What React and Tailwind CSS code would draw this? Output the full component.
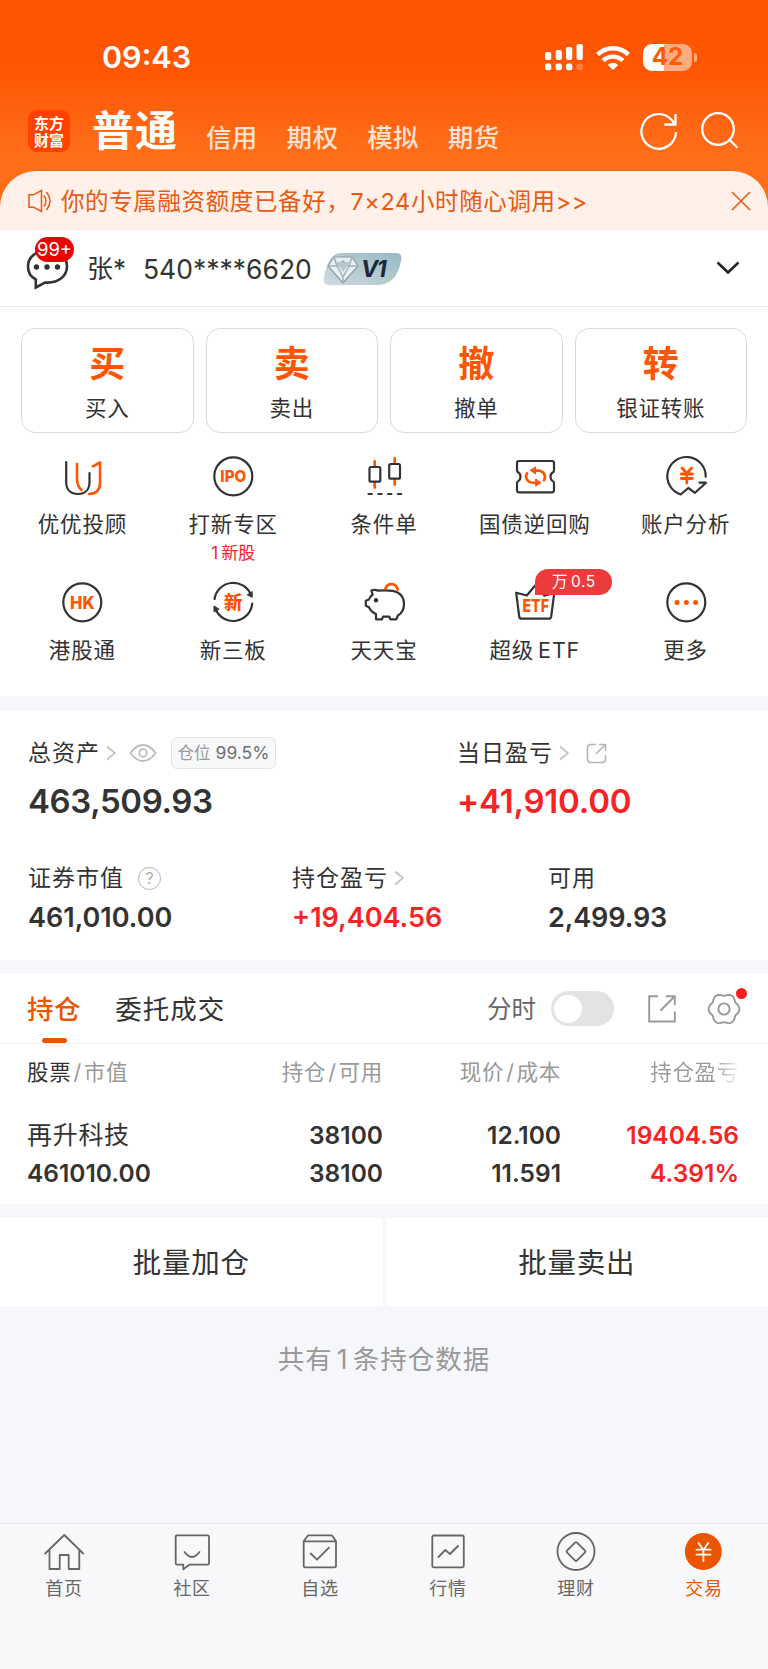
const actions = [
  { char: "买", label: "买入" },
  { char: "卖", label: "卖出" },
  { char: "撤", label: "撤单" },
  { char: "转", label: "银证转账" },
];

const DARK = "#333333";
const ORANGE = "#ff5500";

function Icon({ children }) {
  return (
    <svg
      width="40"
      height="40"
      viewBox="0 0 40 40"
      fill="none"
      strokeWidth="2.200"
      strokeLinecap="round"
      strokeLinejoin="round"
      className="overflow-visible"
    >
      {children}
    </svg>
  );
}

function IconText({ children, x = 20.3, y, size, length }) {
  return (
    <text
      x={x}
      y={y}
      textAnchor="middle"
      fontSize={size}
      fontWeight="800"
      fill={ORANGE}
      textLength={length}
      lengthAdjust="spacingAndGlyphs"
    >
      {children}
    </text>
  );
}

const services = [
  {
    label: "优优投顾",
    icon: (
      <Icon>
        <path d="M4.2 6V26C4.2 34 9 38 16 38S27.5 33.500 27.500 26V17" stroke={DARK} />
        <path d="M15 8V22C15 28 16.500 31.500 19.500 34M30.800 10.300 38 6.500V27C38 34 34.500 37.800 27 38" stroke={ORANGE} strokeWidth="2.600" />
      </Icon>
    ),
  },
  {
    label: "打新专区",
    sub: (
      <>
        <span className="mr-[3px]">1</span>新股
      </>
    ),
    icon: (
      <Icon>
        <circle cx="20.300" cy="20.300" r="19" stroke={DARK} />
        <IconText y="26.400" size="16.500" length="26">IPO</IconText>
      </Icon>
    ),
  },
  {
    label: "条件单",
    icon: (
      <Icon>
        <path d="M10.700 5.500V10.500M10.700 26.500V31.500M30.700 2.500V7.500M30.700 23.500V28.500" stroke={ORANGE} strokeWidth="2.800" />
        <rect x="5.500" y="11" width="10.800" height="14.700" rx="1.500" stroke={DARK} />
        <rect x="25.200" y="8" width="10.800" height="14.700" rx="1.500" stroke={DARK} />
        <path d="M4.500 38H38.500" stroke={DARK} strokeDasharray="3.300 6.500" />
      </Icon>
    ),
  },
  {
    label: "国债逆回购",
    icon: (
      <Icon>
        <path
          d="M4 5H37Q39 5 39 7V14.500Q39 16 37.500 16.500Q35.500 18 35.500 20.700T37.500 25Q39 25.500 39 27V34.300Q39 36.300 37 36.300H4Q2 36.300 2 34.300V27Q2 25.500 3.500 25Q5.500 23.400 5.500 20.700T3.500 16.500Q2 16 2 14.500V7Q2 5 4 5Z"
          stroke={DARK}
        />
        <path d="M12 17.300C9.500 21 12 26.300 17.500 26.800H21M29 24.300C31.500 20.500 29 15 23.500 14.600H20" stroke={ORANGE} strokeWidth="2.600" />
        <path d="M20.500 11.300V18L15.500 14.600ZM20.700 23.400V30.200L25.700 26.800Z" fill={ORANGE} stroke={ORANGE} strokeWidth="1" />
      </Icon>
    ),
  },
  {
    label: "账户分析",
    icon: (
      <Icon>
        <path d="M39.700 20.700A19.200 19.200 0 1 0 14.700 38.500L22.300 32 29 36.800 40 26.700H33.500" stroke={DARK} />
        <path d="M16 12 20.800 17.500 25.600 12M20.800 17.500V27M15.300 18H26.300M15.300 22.500H26.300" stroke={ORANGE} strokeWidth="2.800" />
      </Icon>
    ),
  },
  {
    label: "港股通",
    icon: (
      <Icon>
        <circle cx="20.300" cy="20.300" r="19" stroke={DARK} />
        <IconText y="26.500" size="17" length="24.500">HK</IconText>
      </Icon>
    ),
  },
  {
    label: "新三板",
    icon: (
      <Icon>
        <path d="M1.500 17A19 19 0 0 1 37.800 12.500M39.200 21.500A19 19 0 0 1 2.800 27.500" stroke={DARK} />
        <path d="M39.200 10V15.300L34.500 13ZM1 29.500V24L5.800 27Z" fill={DARK} stroke={DARK} strokeWidth="1" />
        <IconText y="26.800" size="18" length="18.500">新</IconText>
      </Icon>
    ),
  },
  {
    label: "天天宝",
    icon: (
      <Icon>
        <path
          d="M14 8.700Q11 7 7.300 8.500L8.700 12.500Q6 14.500 5 17.500L1.800 18.700V23.700L5 25.300Q7 30 12 32V37.300H18L19 34.700H25.300L26.300 37.300H32.300L34 33.500C42.500 28 41.500 15 34 10.800C29 7.800 20 8.300 14 8.700Z"
          stroke={DARK}
        />
        <circle cx="12" cy="18.300" r="2.200" fill={DARK} />
        <path d="M21.500 6.200C24 .5 31.500 .5 33.800 7.500" stroke={ORANGE} strokeWidth="2.800" />
      </Icon>
    ),
  },
  {
    label: (
      <>
        超级<span className="ml-1">ETF</span>
      </>
    ),
    badge: (
      <>
        万<span className="ml-[3px]">0.5</span>
      </>
    ),
    icon: (
      <Icon>
        <path d="M1.200 10.700 4.200 34.500Q4.500 36.700 6.500 36.700H33.800Q35.800 36.700 36.200 34.500L39.300 10.700 29.500 13.700 20.300 3.300 11.800 13.500Z" stroke={DARK} />
        <IconText x="20.700" y="30.200" size="17.500" length="26.500">ETF</IconText>
      </Icon>
    ),
  },
  {
    label: "更多",
    icon: (
      <Icon>
        <circle cx="20.300" cy="20.300" r="19" stroke={DARK} />
        <g fill={ORANGE}>
          <circle cx="11" cy="20.500" r="2.500" />
          <circle cx="20.300" cy="20.500" r="2.500" />
          <circle cx="29.600" cy="20.500" r="2.500" />
        </g>
      </Icon>
    ),
  },
];

const navItems = [
  {
    label: "首页",
    icon: <path d="M1.200 21.500 20.300 3 39.200 21.500M5.500 18V37H15.700V23H24.700V37H35.300V18" />,
  },
  {
    label: "社区",
    icon: (
      <path d="M5 3.300H35.500Q37 3.300 37 4.800V31.200Q37 32.700 35.500 32.700H17.300L11.300 37.200V32.700H5Q3.700 32.700 3.700 31.200V4.800Q3.700 3.300 5 3.300ZM12.500 20Q20 30 27.500 20" />
    ),
  },
  {
    label: "自选",
    icon: (
      <path d="M3.700 9.300 7.500 4Q8 3.300 9 3.300H31Q32 3.300 32.500 4L36 9.300V33.500Q36 35.300 34.500 35.300H5.200Q3.700 35.300 3.700 33.500ZM3.700 9.300H36M10.700 21.500 17 27.700 29 15.700" />
    ),
  },
  {
    label: "行情",
    icon: (
      <>
        <rect x="4.300" y="3.500" width="31.500" height="31.800" rx="1.500" />
        <path d="M10.500 25 17.300 18 22 22 30 14" />
      </>
    ),
  },
  {
    label: "理财",
    icon: (
      <>
        <circle cx="20" cy="19.500" r="18.500" />
        <rect x="13" y="12.500" width="14" height="14" rx="1.500" transform="rotate(45 20 19.500)" />
      </>
    ),
  },
  {
    label: "交易",
    active: true,
    icon: (
      <>
        <circle cx="19.300" cy="19.500" r="18.500" fill="#eb5500" stroke="none" />
        <path d="M14.500 11 19.400 18 24.300 11M19.400 18V29M12.500 17.700H26.500M12.500 22.700H26.500" stroke="#fff" />
      </>
    ),
  },
];

// six-lobed outline used by the settings button
const gearPath =
  Array.from({ length: 72 }, (_, i) => {
    const a = (i * Math.PI) / 36;
    const r = 14.4 + 1.1 * Math.cos(6 * a) - 0.1 * Math.cos(12 * a);
    return `${i ? "L" : "M"}${(17 + r * Math.cos(a)).toFixed(2)} ${(17 + r * Math.sin(a)).toFixed(2)}`;
  }).join("") + "Z";

function ChevronRight() {
  return (
    <svg width="10" height="16" viewBox="0 0 10 16" fill="none" stroke="#c2c2c2" strokeWidth="1.700">
      <path d="M1 1.500 9 8 1 14.500" />
    </svg>
  );
}

function StatusBar() {
  return (
    <div className="flex h-[94px] items-center pt-[20px] pl-[102px]">
      <span className="w-[443px] text-[30.500px] leading-none font-semibold">09:43</span>
      <svg width="38" height="27" viewBox="0 0 38 27" fill="#fff">
        <rect x="0" y="8" width="6.300" height="8" rx="2" />
        <rect x="10.600" y="6" width="6.300" height="10" rx="2" />
        <rect x="21" y="3" width="6.300" height="13" rx="2" />
        <rect x="31.500" y="0" width="6.300" height="16" rx="2" />
        <rect x="0" y="19.500" width="6.300" height="6.700" rx="2" />
        <rect x="10.600" y="19.500" width="6.300" height="6.700" rx="2" />
        <rect x="21" y="19.500" width="6.300" height="6.700" rx="2" />
        <rect x="31.500" y="19.500" width="6.300" height="6.700" rx="2" opacity=".25" />
      </svg>
      <svg className="ml-[13px]" width="34" height="25" viewBox="0 0 34 25" fill="none" stroke="#fff" strokeWidth="4.400">
        <path d="M1.600 9.600A22 22 0 0 1 32.400 9.600" />
        <path d="M7.200 15.600A14 14 0 0 1 26.800 15.600" />
        <path d="M17 25 11.800 20A7.400 7.400 0 0 1 22.200 20Z" fill="#fff" stroke="none" />
      </svg>
      <div className="ml-[13px] flex items-center">
        <div className="flex h-[27px] w-[49px] items-center justify-center rounded-[9px] bg-[linear-gradient(90deg,#fff_43%,#ffab80_43%)] text-[24px] leading-none font-bold text-[#ff5a08]">
          42
        </div>
        <div className="ml-[2px] h-[9px] w-[3px] rounded-r-full bg-[#ffab80]" />
      </div>
    </div>
  );
}

function Header() {
  return (
    <header className="h-[211px] bg-[linear-gradient(180deg,#ff5500_0px,#ff5602_70px,#ff6d19_150px,#ff6d19_211px)] text-white">
      <StatusBar />
      <div className="flex h-[74px] items-center pl-7">
        <div className="flex size-[42px] flex-col items-center justify-center rounded-[9px] bg-[#ff4200] font-['Noto_Sans_CJK_SC',sans-serif] text-[15px] leading-[17px] font-bold">
          <span>东方</span>
          <span>财富</span>
        </div>
        <h1 className="ml-[22px] w-[114px] text-[42px] leading-none font-bold tracking-[1px] whitespace-nowrap">普通</h1>
        <div className="mt-[13px] flex gap-[29px] text-[25.500px] leading-none font-medium tracking-[0.300px] text-[#ffe1d0]">
          <span>信用</span>
          <span>期权</span>
          <span>模拟</span>
          <span>期货</span>
        </div>
        <svg className="ml-auto" width="40" height="40" viewBox="0 0 40 40" fill="none" stroke="#fff" strokeWidth="2.300">
          <path d="M36 21A17.300 17.300 0 1 1 31.500 8.800L35 13" />
          <path d="M35.500 3V13.500H24.300" />
        </svg>
        <svg className="mr-[27px] ml-[21px]" width="40" height="40" viewBox="0 0 40 40" fill="none" stroke="#fff" strokeWidth="2.300">
          <circle cx="17" cy="18" r="15.800" />
          <path d="M28.300 28.500 36.500 36.700" />
        </svg>
      </div>
    </header>
  );
}

function Notice() {
  return (
    <div className="relative -mt-10 flex h-[59px] items-center rounded-t-[36px] bg-[#fff1ea] pl-7 text-[#e85a10]">
      <svg width="24" height="24" viewBox="0 0 24 24" fill="none" stroke="currentColor" strokeWidth="1.500">
        <path d="M1 5.800H5.500L13.500 1.500V22.500L5.500 18.200H1ZM16 6.500Q19.800 12 16 17.500M18.500 3Q25.500 12 18.500 21" />
      </svg>
      <p className="mt-[2px] ml-[9px] text-[23.500px] leading-none tracking-[0.620px] whitespace-nowrap">
        你的专属融资额度已备好，7×24小时随心调用&gt;&gt;
      </p>
      <svg className="mr-[17px] ml-auto" width="20" height="20" viewBox="0 0 20 20" stroke="currentColor" strokeWidth="1.600">
        <path d="M1 1 19 19M19 1 1 19" />
      </svg>
    </div>
  );
}

function Account() {
  return (
    <div className="flex h-[77px] items-center border-b border-[#ebebeb] pl-[26px] text-[#333]">
      <div className="relative">
        <svg width="44" height="44" viewBox="0 0 44 44" fill="none" stroke="#333" strokeWidth="2.600">
          <path d="M21.500 4.500C10 4.500 2 11 2 20.500C2 26.500 5 31 9.800 33.500V41.500L19 36.500C33 37.500 41 29.500 41 20.500C41 11 33 4.500 21.500 4.500Z" />
          <g fill="#333" stroke="none">
            <circle cx="10.500" cy="21" r="2.700" />
            <circle cx="21" cy="21" r="2.700" />
            <circle cx="31.500" cy="21" r="2.700" />
          </g>
        </svg>
        <span className="absolute -top-[9px] left-[9px] flex h-[25px] w-[39px] items-center justify-center rounded-full bg-[#ee0000] text-[18.500px] text-white">
          99+
        </span>
      </div>
      <span className="mt-[2px] ml-[17px] w-[56px] text-[26px] leading-none">张*</span>
      <span className="mt-[2px] w-[180px] text-[26.500px] leading-none">540****6620</span>
      <div className="relative mt-[2px] h-8 w-[79px]">
        <svg width="79" height="32" viewBox="0 0 79 32">
          <defs>
            <linearGradient id="vip" x1="0" y1="1" x2="1" y2="0">
              <stop offset="0" stopColor="#cfdbe0" />
              <stop offset=".5" stopColor="#b5c9cf" />
              <stop offset="1" stopColor="#94bac5" />
            </linearGradient>
          </defs>
          <path d="M18 0H73Q80 0 78 8C75 24 67 32 54 32H7Q-1 32 1 24C3 16 6 0 18 0Z" fill="url(#vip)" />
          <path d="M11 4H29L35 13 20 30 5 13Z" fill="#e8eff1" stroke="#8c9da4" strokeWidth="1.200" />
          <path d="M5 13H14L20 24 26 13H35M11 4 14 13 20 8 26 13 29 4M20 24V30" fill="none" stroke="#a2b1b7" strokeWidth="1.500" />
          <path d="M13 9H27L20 19Z" fill="#b9c6ca" />
        </svg>
        <span className="absolute top-[2px] left-[38px] text-[23px] leading-7 font-bold tracking-[-1.500px] text-[#1d2737] italic">V1</span>
      </div>
      <svg className="mr-[28px] ml-auto" width="24" height="14" viewBox="0 0 24 14" fill="none" stroke="#222" strokeWidth="2.600">
        <path d="M1.500 1.500 12 11.500 22.500 1.500" />
      </svg>
    </div>
  );
}

function Services() {
  return (
    <section className="h-[389px] pt-[21px]">
      <div className="grid grid-cols-4 gap-3 px-[21px]">
        {actions.map((a) => (
          <button key={a.label} className="flex h-[105px] flex-col items-center rounded-[14px] border border-[#dadada] pt-[17px]">
            <span className="text-[36px] leading-[36px] font-bold text-[#ff5500]">{a.char}</span>
            <span className="mt-[15px] text-[21.500px] leading-[22px] tracking-[0.700px]">{a.label}</span>
          </button>
        ))}
      </div>
      <div className="mt-[23px] grid grid-cols-5 px-[7px]">
        {services.map((s, i) => (
          <div key={i} className="relative flex h-[126px] flex-col items-center">
            {s.icon}
            <span className="mt-[17px] text-[21.500px] leading-[22px] tracking-[0.850px] whitespace-nowrap">{s.label}</span>
            {s.sub && <span className="mt-[9px] text-[17px] leading-[18px] text-[#f52222]">{s.sub}</span>}
            {s.badge && (
              <span className="absolute -top-[13px] left-[76px] flex h-[26px] w-[77px] items-center justify-center rounded-full rounded-bl-none bg-[#ec3b3d] text-[15.500px] tracking-[0.500px] text-white">
                {s.badge}
              </span>
            )}
          </div>
        ))}
      </div>
    </section>
  );
}

function Assets() {
  return (
    <section className="mt-[15px] h-[249px] pt-[26px] pl-[28px]">
      <div className="flex">
        <div className="w-[429px]">
          <div className="flex h-[32px] items-center">
            <span className="text-[23px] leading-none tracking-[1px]">总资产</span>
            <span className="ml-[6px]">
              <ChevronRight />
            </span>
            <svg className="ml-[13px]" width="28" height="20" viewBox="0 0 28 20" fill="none" stroke="#bdbdbd" strokeWidth="1.800">
              <path d="M1.500 10Q7 2 14 2T26.500 10Q21 18 14 18T1.500 10Z" />
              <circle cx="14" cy="10" r="3.800" />
            </svg>
            <span className="ml-[14px] flex h-[32px] w-[105px] items-center justify-center rounded-md border border-[#e4e4e6] bg-[#f7f8fa] text-[17.500px] text-[#6f6f6f]">
              <span className="mr-[5px] text-[16.500px] text-[#999]">仓位</span>99.5%
            </span>
          </div>
          <div className="mt-[15px] text-[33px] leading-[34px] font-semibold tracking-[-0.400px]">463,509.93</div>
        </div>
        <div>
          <div className="flex h-[32px] items-center">
            <span className="text-[23px] leading-none tracking-[1px]">当日盈亏</span>
            <span className="ml-[6px]">
              <ChevronRight />
            </span>
            <svg className="ml-[17px]" width="21" height="21" viewBox="0 0 21 21" fill="none" stroke="#b5b5b5" strokeWidth="1.600">
              <path d="M10 1.500H5Q1.500 1.500 1.500 5V16Q1.500 19.500 5 19.500H16Q19.500 19.500 19.500 16V12M10 11 19.500 1.500M13 1.500H19.500V8" />
            </svg>
          </div>
          <div className="mt-[15px] text-[33px] leading-[34px] font-semibold tracking-[-0.200px] text-[#f92323]">+41,910.00</div>
        </div>
      </div>
      <div className="mt-[48px] flex">
        <div className="w-[264px]">
          <div className="flex h-6 items-center">
            <span className="text-[23px] leading-none tracking-[1px]">证券市值</span>
            <span className="ml-[14px] flex size-[23px] items-center justify-center rounded-full border-[1.500px] border-[#b5b5b5] text-[16px] text-[#aaa]">?</span>
          </div>
          <div className="mt-[14px] text-[27px] leading-[28px] font-semibold">461,010.00</div>
        </div>
        <div className="w-[256px]">
          <div className="flex h-6 items-center">
            <span className="text-[23px] leading-none tracking-[1px]">持仓盈亏</span>
            <span className="ml-[6px]">
              <ChevronRight />
            </span>
          </div>
          <div className="mt-[14px] text-[27px] leading-[28px] font-semibold text-[#f92323]">+19,404.56</div>
        </div>
        <div>
          <div className="flex h-6 items-center text-[23px] tracking-[1px]">可用</div>
          <div className="mt-[14px] text-[27px] leading-[28px] font-semibold tracking-[-0.100px]">2,499.93</div>
        </div>
      </div>
    </section>
  );
}

function Holdings() {
  return (
    <section className="mt-[14px]">
      <div className="flex h-[70px] items-center border-b border-[#f0f1f4] pl-[27px]">
        <div className="relative flex h-full items-center pt-[2px] text-[26.500px] font-medium tracking-[0.600px] text-[#eb5500]">
          持仓
          <span className="absolute bottom-0 left-[15px] h-[5px] w-[25px] rounded-full bg-[#eb5500]" />
        </div>
        <span className="mt-[2px] ml-[34px] text-[26.500px] tracking-[1px]">委托成交</span>
        <span className="mt-[2px] ml-auto text-[24.500px] text-[#666]">分时</span>
        <span className="ml-[15px] flex h-[35px] w-[63px] items-center rounded-full bg-[#e3e3e6] pl-[3px]">
          <span className="size-7 rounded-full bg-white" />
        </span>
        <svg className="ml-[34px]" width="28" height="28" viewBox="0 0 28 28" fill="none" stroke="#999" strokeWidth="1.900">
          <path d="M10 1.200H1.200V26.500H26.800V16.500M12.500 15.500 26.500 1.500M18 1.200H26.800V10" />
        </svg>
        <span className="relative mr-[27px] ml-[31px]">
          <svg width="34" height="34" viewBox="0 0 34 34" fill="none" stroke="#999" strokeWidth="1.900">
            <path d={gearPath} />
            <circle cx="17" cy="17" r="5.600" />
          </svg>
          <span className="absolute -top-[4px] right-[-6px] size-[11px] rounded-full bg-[#fa1e1e]" />
        </span>
      </div>
      <div className="grid grid-cols-[1fr_150px_178px_178px] pt-[17px] pr-[29px] pl-[27px] text-right text-[21.500px] leading-[22px] tracking-[0.700px] text-[#999]">
        <span className="text-left">
          <span className="text-[#333]">股票</span>
          <span className="mx-[2px]">/</span>市值
        </span>
        <span>
          持仓<span className="mx-[2px]">/</span>可用
        </span>
        <span>
          现价<span className="mx-[2px]">/</span>成本
        </span>
        <span className="ml-auto bg-[linear-gradient(90deg,#999_72%,#f2f2f2)] bg-clip-text text-transparent">持仓盈亏</span>
      </div>
      <div className="grid h-[121px] grid-cols-[1fr_150px_178px_178px] content-start gap-y-[10px] pt-[38px] pr-[29px] pl-[27px] text-right text-[24.500px] leading-[28px] font-semibold">
        <span className="text-left text-[25px] font-normal tracking-[0.700px]">再升科技</span>
        <span>38100</span>
        <span>12.100</span>
        <span className="text-[#f92323]">19404.56</span>
        <span className="text-left">461010.00</span>
        <span>38100</span>
        <span>11.591</span>
        <span className="text-[#f92323]">4.391%</span>
      </div>
    </section>
  );
}

function BottomNav() {
  return (
    <nav className="grid h-[146px] grid-cols-6 border-t border-[#e6e6ed] bg-[#f8f8fb] pt-[8px]">
      {navItems.map((item) => (
        <div key={item.label} className={`flex flex-col items-center ${item.active ? "text-[#eb5500]" : "text-[#666]"}`}>
          <svg
            width="40"
            height="40"
            viewBox="0 0 40 40"
            fill="none"
            stroke="currentColor"
            strokeWidth="1.800"
            strokeLinecap="round"
            strokeLinejoin="round"
          >
            {item.icon}
          </svg>
          <span className="mt-[7px] text-[18px] leading-[20px] tracking-[0.800px]">{item.label}</span>
        </div>
      ))}
    </nav>
  );
}

export default function App() {
  return (
    <div className="flex h-[1669px] w-[768px] flex-col overflow-hidden bg-[#f6f7fa] font-['Inter','Noto_Sans_CJK_SC',sans-serif] text-[#333] [&>section]:bg-white">
      <Header />
      <Notice />
      <div className="bg-white">
        <Account />
      </div>
      <Services />
      <Assets />
      <Holdings />
      <div className="mt-[14px] grid h-[88px] grid-cols-2 gap-[3px] text-[28.500px] tracking-[0.800px]">
        <button className="bg-white pt-[3px]">批量加仓</button>
        <button className="bg-white pt-[3px]">批量卖出</button>
      </div>
      <p className="mt-[37px] text-center text-[26.500px] leading-[32px] tracking-[1px] text-[#999]">
        共有<span className="mx-1">1</span>条持仓数据
      </p>
      <div className="mt-auto">
        <BottomNav />
      </div>
    </div>
  );
}
